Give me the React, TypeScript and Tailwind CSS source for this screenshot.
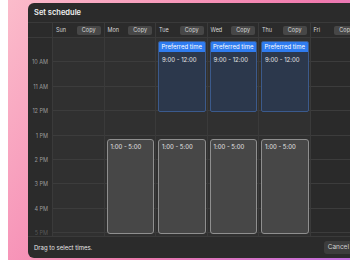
const HOUR = 24.4;

type Block = { start: number; end: number; label: string; kind: string };

const days: { name: string; blocks: Block[] }[] = [
  { name: "Sun", blocks: [] },
  { name: "Mon", blocks: [{ start: 4, end: 8, label: "1:00 - 5:00", kind: "gray" }] },
  {
    name: "Tue",
    blocks: [
      { start: 0, end: 3, label: "9:00 - 12:00", kind: "blue" },
      { start: 4, end: 8, label: "1:00 - 5:00", kind: "gray" },
    ],
  },
  {
    name: "Wed",
    blocks: [
      { start: 0, end: 3, label: "9:00 - 12:00", kind: "blue" },
      { start: 4, end: 8, label: "1:00 - 5:00", kind: "gray" },
    ],
  },
  {
    name: "Thu",
    blocks: [
      { start: 0, end: 3, label: "9:00 - 12:00", kind: "blue" },
      { start: 4, end: 8, label: "1:00 - 5:00", kind: "gray" },
    ],
  },
  { name: "Fri", blocks: [] },
];

const hours = ["10 AM", "11 AM", "12 PM", "1 PM", "2 PM", "3 PM", "4 PM", "5 PM"];

const EventBlock = ({ b }: { b: Block }) => {
  const style = { top: b.start * HOUR + 3, height: (b.end - b.start) * HOUR - 2.5 };
  if (b.kind === "blue") {
    return (
      <div
        className="absolute left-[2px] right-[1px] rounded-[2px] border border-[#3b5a8c] bg-[#2c384c] overflow-hidden"
        style={style}
      >
        <div className="h-[10px] bg-[#2f7cf0] text-white text-[6px] leading-[10px] text-center">Preferred time</div>
        <div className="pl-[3px] pt-[4px] text-[6px] leading-[8px] text-[#e4e4e4]">{b.label}</div>
      </div>
    );
  }
  return (
    <div
      className="absolute left-[2px] right-[1px] rounded-[3px] border border-[#8f8f8f] bg-[#474747]"
      style={style}
    >
      <div className="pl-[3px] pt-[3px] text-[6px] leading-[8px] text-[#e4e4e4]">{b.label}</div>
    </div>
  );
};

const App = () => {
  return (
    <div className="w-[350px] h-[263px] bg-white overflow-hidden font-['Inter',sans-serif]">
      <div className="ml-[8px] h-[260px] pt-[3px] pl-[20px] bg-[linear-gradient(125deg,#fbbccb_0%,#f690b6_40%,#f07aae_60%,#c56fe2_100%)]">
        <div className="w-[380px] h-[255px] rounded-[6px] bg-[#2b2b2b] flex flex-col overflow-hidden">
          <div className="h-[20px] flex items-center px-[6px] border-b border-[#3a3a3a]">
            <span className="text-[7.5px] font-semibold text-[#f0f0f0]">Set schedule</span>
          </div>
          <div className="flex h-[15px] border-b border-[#3a3a3a]">
            <div className="w-[25px] shrink-0 border-r border-[#3a3a3a]" />
            {days.map((d) => (
              <div key={d.name} className="w-[51.5px] shrink-0 flex items-center justify-between px-[3px] border-r border-[#3a3a3a]">
                <span className="text-[5.5px] text-[#d8d8d8]">{d.name}</span>
                <span className="h-[9px] px-[5px] rounded-[2px] bg-[#474747] text-[5.5px] leading-[9px] text-[#d8d8d8]">Copy</span>
              </div>
            ))}
          </div>
          <div className="flex h-[198px] overflow-hidden">
            <div className="w-[25px] shrink-0 relative border-r border-[#3a3a3a]">
              {hours.map((h, i) => (
                <div
                  key={h}
                  className={`absolute right-[4px] text-[5.5px] leading-[8px] text-[#9a9a9a] ${i === 7 ? "opacity-40" : ""}`}
                  style={{ top: (i + 1) * HOUR - 4 }}
                >
                  {h}
                </div>
              ))}
            </div>
            {days.map((d) => (
              <div
                key={d.name}
                className={`w-[51.5px] shrink-0 relative border-r border-[#3a3a3a] ${d.name === "Fri" ? "bg-[#2a2a2a]" : "bg-[#303030]"}`}
              >
                {hours.map((h) => (
                  <div key={h} className="h-[24.4px] border-b border-[#3c3c3c]" />
                ))}
                {d.blocks.map((b, i) => (
                  <EventBlock key={i} b={b} />
                ))}
              </div>
            ))}
          </div>
          <div className="flex-1 flex items-center justify-between px-[6px] border-t border-[#3a3a3a]">
            <span className="text-[6px] text-[#e6e6e6]">Drag to select times.</span>
            <span className="mr-[49px] h-[13px] px-[4px] rounded-[3px] bg-[#3d3d3d] text-[6.5px] leading-[13px] text-[#cfcfcf]">Cancel</span>
          </div>
        </div>
      </div>
    </div>
  );
};

export default App;
